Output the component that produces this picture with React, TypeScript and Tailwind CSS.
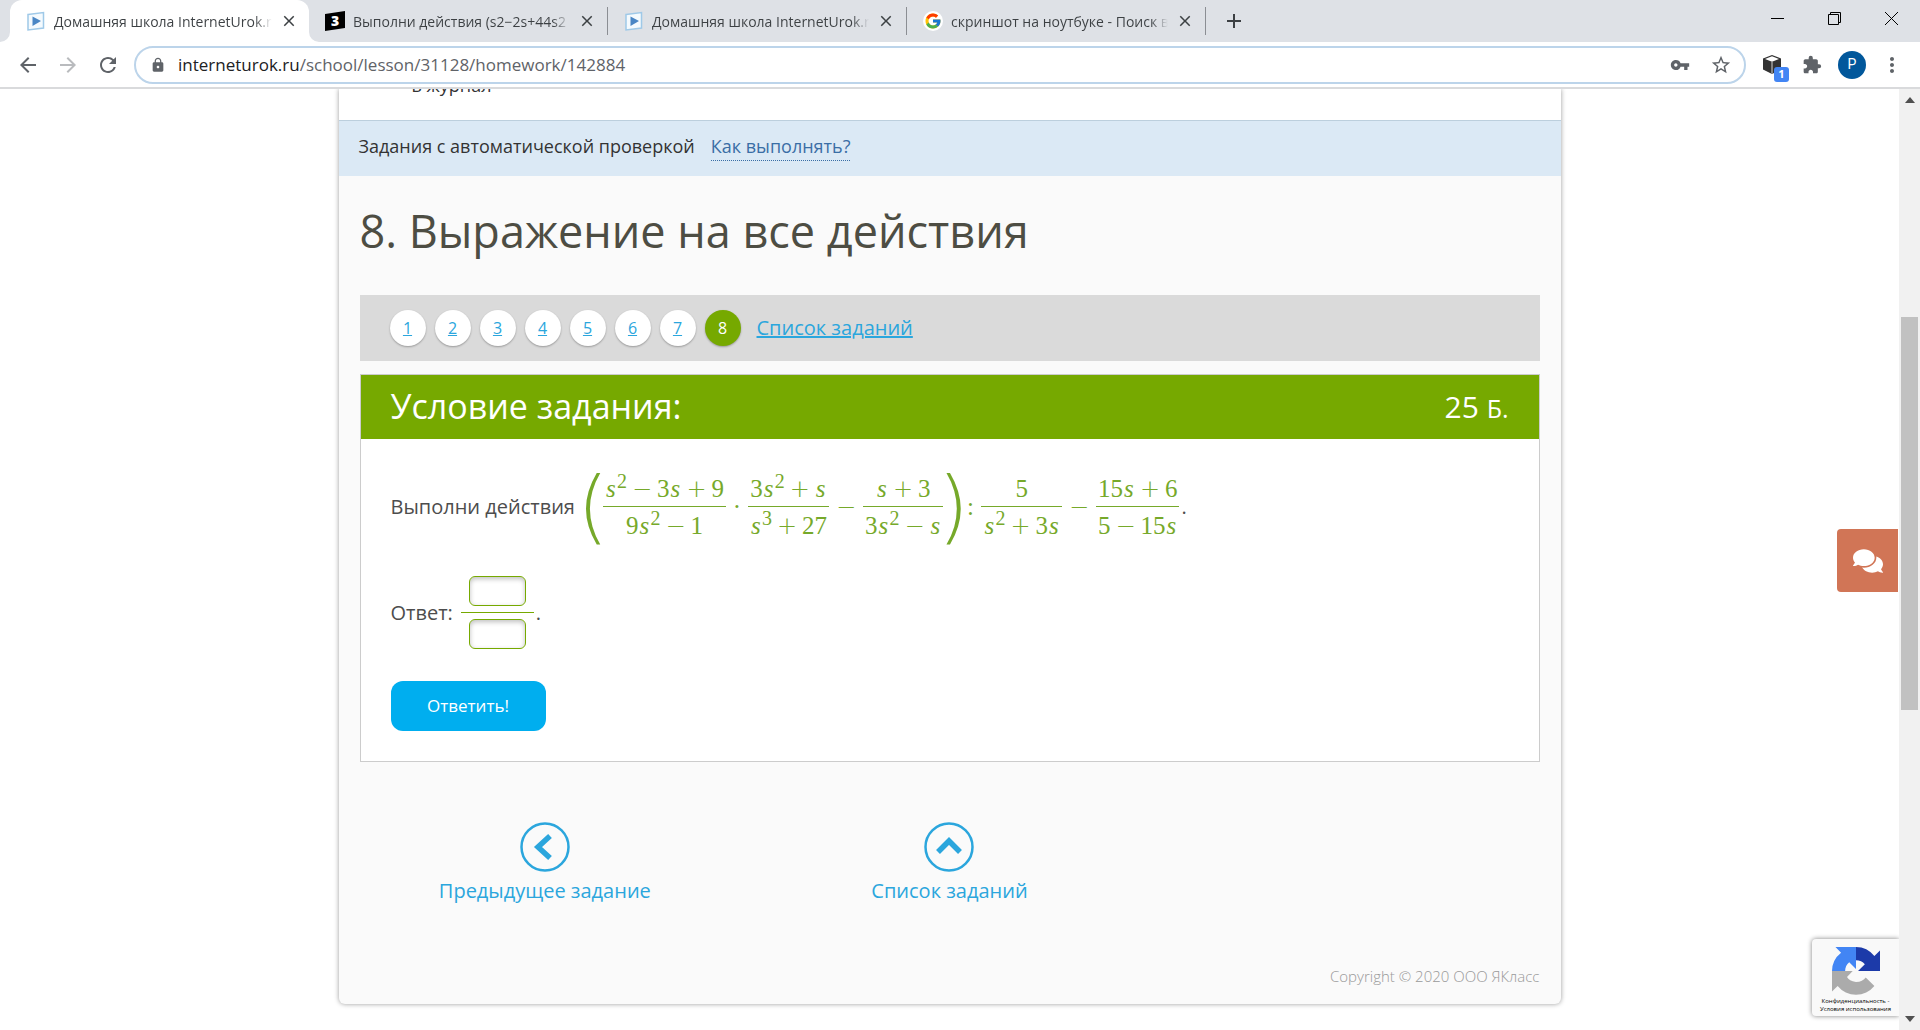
import type { ReactNode } from 'react';
import { FaComments } from 'react-icons/fa';
import { FcGoogle } from 'react-icons/fc';
import {
  MdAdd,
  MdArrowBack,
  MdArrowForward,
  MdClose,
  MdExtension,
  MdLock,
  MdMoreVert,
  MdRefresh,
  MdStarBorder,
  MdVpnKey,
} from 'react-icons/md';

const tabs = [
  { title: 'Домашняя школа InternetUrok.ru', icon: 'play', active: true },
  { title: 'Выполни действия (s2−2s+44s2', icon: 'znanija', active: false },
  { title: 'Домашняя школа InternetUrok.ru', icon: 'play', active: false },
  { title: 'скриншот на ноутбуке - Поиск в', icon: 'google', active: false },
];

const TabIcon = ({ name }: { name: string }) => {
  if (name === 'google') {
    return (
      <span className="flex size-5 shrink-0 items-center justify-center rounded-full bg-white">
        <FcGoogle className="size-[18px]" />
      </span>
    );
  }
  if (name === 'znanija') {
    return (
      <svg viewBox="0 0 20 20" className="size-5 shrink-0">
        <path d="M0 3L20 0v17L0 20z" fill="#000" />
        <text x="10" y="15" textAnchor="middle" fontFamily="Open Sans, sans-serif" fontWeight="800" fontSize="14" fill="#fff">
          3
        </text>
      </svg>
    );
  }
  return (
    <svg viewBox="0 0 20 20" className="size-5 shrink-0">
      <path d="M2 3.500L17.500 1.500V17L2 19z" fill="#f4fafe" stroke="#9fc9e8" strokeWidth="1.500" />
      <path d="M6.500 5.500L15 10l-8.500 5z" fill="#4a86c5" />
    </svg>
  );
};

const TabStrip = () => (
  <div className="flex h-[42px] shrink-0 bg-[#dee1e6] pl-[10px]">
    {tabs.map((tab, i) => (
      <div
        key={i}
        className={`relative flex w-[299px] items-center ${tab.active ? 'rounded-t-xl bg-white' : ''}`}
      >
        {/* curved feet of the active tab */}
        {tab.active && (
          <>
            <svg viewBox="0 0 10 10" className="absolute bottom-0 -left-[10px] size-[10px]">
              <path d="M10 0v10H0A10 10 0 0 0 10 0z" fill="#fff" />
            </svg>
            <svg viewBox="0 0 10 10" className="absolute -right-[10px] bottom-0 size-[10px]">
              <path d="M0 0v10h10A10 10 0 0 1 0 0z" fill="#fff" />
            </svg>
          </>
        )}
        <div className={`flex h-7 w-full items-center gap-2 pr-[11px] pl-4 ${tab.active ? '' : 'border-r border-[#8b8e93]'}`}>
          <TabIcon name={tab.icon} />
          <span className="flex-1 overflow-hidden whitespace-nowrap bg-linear-to-r from-[#3c4043] from-92% to-transparent bg-clip-text text-[14px] text-transparent">
            {tab.title}
          </span>
          <button aria-label="Закрыть вкладку">
            <MdClose className="size-[18px] text-[#3c4043]" />
          </button>
        </div>
      </div>
    ))}
    <button aria-label="Новая вкладка" className="ml-4">
      <MdAdd className="size-6 text-[#3c4043]" />
    </button>
    <div className="ml-auto flex h-9 items-center">
      <button aria-label="Свернуть" className="flex w-[57px] justify-center">
        <svg viewBox="0 0 13 13" className="size-[13px]">
          <path d="M0 6.500h13" stroke="#000" />
        </svg>
      </button>
      <button aria-label="Восстановить" className="flex w-[57px] justify-center">
        <svg viewBox="0 0 13 13" className="size-[13px]" fill="none" stroke="#000">
          <path d="M.5 2.500h10v10H.5zM2.500 2.500v-2h10v10h-2" />
        </svg>
      </button>
      <button aria-label="Закрыть" className="flex w-[57px] justify-center">
        <svg viewBox="0 0 13 13" className="size-[13px]">
          <path d="M0 0l13 13M13 0L0 13" stroke="#000" />
        </svg>
      </button>
    </div>
  </div>
);

const Toolbar = () => (
  <div className="flex h-[47px] shrink-0 items-center border-b-2 border-[#d9dadc] bg-white px-4 text-[#5f6368]">
    <button aria-label="Назад">
      <MdArrowBack className="size-6" />
    </button>
    <button aria-label="Вперёд" className="ml-4">
      <MdArrowForward className="size-6 text-[#b9bbbe]" />
    </button>
    <button aria-label="Обновить" className="ml-4">
      <MdRefresh className="size-6" />
    </button>
    <div className="ml-[14px] flex h-[38px] flex-1 items-center rounded-full border-2 border-[#bcd4ea] pr-3 pl-[14px]">
      <MdLock className="size-4" />
      <span className="ml-3 flex-1 text-[17px]">
        <span className="text-[#202124]">interneturok.ru</span>/school/lesson/31128/homework/142884
      </span>
      <MdVpnKey className="size-5" />
      <button aria-label="Добавить в закладки" className="ml-5">
        <MdStarBorder className="size-[22px]" />
      </button>
    </div>
    <button aria-label="Расширение" className="relative ml-4">
      <svg viewBox="0 0 20 20" className="size-5">
        <path d="M10 0l9 3.500v11L10 19l-9-4.500v-11z" fill="#333" />
        <path d="M10 1.200l7 2.700-7 2.900-7-2.900z" fill="#fff" />
        <path d="M10 7v11.500" stroke="#fff" strokeWidth=".8" />
      </svg>
      <span className="absolute top-3 left-3 flex size-[15px] items-center justify-center rounded-[3px] bg-[#4285f4] text-[11px] font-bold text-white">
        1
      </span>
    </button>
    <button aria-label="Расширения" className="ml-5">
      <MdExtension className="size-5" />
    </button>
    <button className="ml-4 flex size-7 items-center justify-center rounded-full bg-[#01579b] font-[Roboto] text-[14px] text-white">
      P
    </button>
    <button aria-label="Меню" className="ml-[14px]">
      <MdMoreVert className="size-6" />
    </button>
  </div>
);

const Op = ({ children }: { children: string }) => (
  <span className="mx-[5px] inline-block w-5 text-center font-['DejaVu_Sans'] text-[24px] leading-6 font-extralight">
    {children}
  </span>
);

const S = ({ power }: { power?: string }) => (
  <>
    <i className="inline-block w-3 text-center">s</i>
    {power && <sup className="-top-[9px] text-[20px]">{power}</sup>}
  </>
);

const Frac = ({ top, bottom }: { top: ReactNode; bottom: ReactNode }) => (
  <span className="mx-[2px] flex flex-col items-center whitespace-nowrap">
    <span className="h-9 px-[2px] leading-[38px]">{top}</span>
    <span className="h-px w-full bg-[#76a92a]" />
    <span className="h-9 px-[2px] leading-[38px]">{bottom}</span>
  </span>
);

const Paren = ({ children }: { children: string }) => (
  <span className="flex w-4 justify-center font-['DejaVu_Sans'] text-[80px] leading-[70px] font-extralight">
    {children}
  </span>
);

const Formula = () => (
  <span className="ml-[10px] flex items-center font-['Liberation_Serif'] text-[25px] text-[#76a92a]">
    <Paren>(</Paren>
    <Frac
      top={<><S power="2" /><Op>−</Op>3<S /><Op>+</Op>9</>}
      bottom={<>9<S power="2" /><Op>−</Op>1</>}
    />
    <span className="w-[18px] text-center">·</span>
    <Frac
      top={<>3<S power="2" /><Op>+</Op><S /></>}
      bottom={<><S power="3" /><Op>+</Op>27</>}
    />
    <Op>−</Op>
    <Frac
      top={<><S /><Op>+</Op>3</>}
      bottom={<>3<S power="2" /><Op>−</Op><S /></>}
    />
    <Paren>)</Paren>
    <span className="w-[18px] text-center">:</span>
    <Frac top="5" bottom={<><S power="2" /><Op>+</Op>3<S /></>} />
    <Op>−</Op>
    <Frac
      top={<>15<S /><Op>+</Op>6</>}
      bottom={<>5<Op>−</Op>15<S /></>}
    />
  </span>
);

const Pager = () => (
  <nav className="flex h-[66px] items-center bg-[#dadada] pl-[30px]">
    {[1, 2, 3, 4, 5, 6, 7].map((n) => (
      <a
        key={n}
        href={`#${n}`}
        className="mr-[9px] flex size-9 items-center justify-center rounded-full bg-white text-[16px] text-[#2ba6dd] underline shadow-[0_1px_2px_rgba(0,0,0,0.3)]"
      >
        {n}
      </a>
    ))}
    <span className="flex size-9 items-center justify-center rounded-full bg-[#76a900] text-[16px] text-white shadow-[0_1px_2px_rgba(0,0,0,0.3)]">
      8
    </span>
    <a href="#list" className="ml-4 text-[20px] text-[#2ba6dd] underline">
      Список заданий
    </a>
  </nav>
);

const Task = () => (
  <section className="mt-[13px] border border-[#ccc] bg-white">
    <header className="flex h-16 items-center justify-between bg-[#76a900] px-[30px] pb-[2px] text-white">
      <h2 className="text-[34px]">Условие задания:</h2>
      <span className="text-[30px]">
        25 <span className="text-[25px]">Б.</span>
      </span>
    </header>
    <div className="px-[30px] pt-[31px] pb-[30px] text-[20px] text-[#4d4d4d]">
      <div className="flex items-center">
        Выполни действия
        <Formula />
        .
      </div>
      <div className="mt-[33px] flex items-center">
        Ответ:
        <div className="mr-[2px] ml-2 flex w-[73px] flex-col items-center">
          <input
            aria-label="Числитель"
            className="h-[30px] w-[57px] rounded-md border border-[#76a900] bg-white px-1 shadow-[inset_0_2px_5px_rgba(0,0,0,0.25)]"
          />
          <span className="my-[6px] h-px w-full bg-[#76a900]" />
          <input
            aria-label="Знаменатель"
            className="h-[30px] w-[57px] rounded-md border border-[#76a900] bg-white px-1 shadow-[inset_0_2px_5px_rgba(0,0,0,0.25)]"
          />
        </div>
        .
      </div>
      <button className="mt-8 h-[50px] w-[155px] rounded-xl bg-[#00aeef] text-[17px] text-white">
        Ответить!
      </button>
    </div>
  </section>
);

const RoundLink = ({ label, path }: { label: string; path: string }) => (
  <a href="#task" className="flex flex-col items-center text-[20px] text-[#2ba6dd]">
    <svg viewBox="0 0 50 50" className="size-[50px]" fill="none" stroke="#2ba6dd">
      <circle cx="25" cy="25" r="23.500" strokeWidth="2.500" />
      <path d={path} strokeWidth="5.500" />
    </svg>
    <span className="mt-[5px] leading-7">{label}</span>
  </a>
);

const Recaptcha = () => (
  <div className="absolute right-0 bottom-[14px] flex h-[77px] w-[87px] flex-col items-center rounded-l-sm bg-[#f9f9f9] pt-2 shadow-[0_0_5px_gray]">
    <svg viewBox="0 0 64 64" className="size-12">
      <path d="M64 32V4.600l-7.500 7.500A31.500 31.500 0 0 0 32 0v17.500c5 0 9 2 11.800 5.500L34.700 32z" fill="#1c3aa9" />
      <path d="M32 0H4.600l7.500 7.500A31.500 31.500 0 0 0 0 32h17.500c0-5 2-9 5.500-11.800l9 9z" fill="#4285f4" />
      <path d="M0 32v27.400l7.500-7.500A31.500 31.500 0 0 0 56.500 52L45 40.500c-2.500 3.700-7 6-13 6-6.500-1-10-3-12-6.500L27.600 32z" fill="#ababab" />
    </svg>
    <span className="mt-[2px] text-center text-[6px] leading-[8px] text-black">
      Конфиденциальность -
      <br />
      Условия использования
    </span>
  </div>
);

const Scrollbar = () => (
  <div className="flex w-[21px] shrink-0 flex-col items-center bg-[#f1f1f1] py-2">
    <svg viewBox="0 0 10 6" className="h-[6px] w-[10px]">
      <path d="M0 6l5-6 5 6z" fill="#505050" />
    </svg>
    <div className="my-2 flex w-[17px] flex-1 flex-col">
      <div className="grow-[205]" />
      <div className="grow-[392] bg-[#c1c1c1]" />
      <div className="grow-[297]" />
    </div>
    <svg viewBox="0 0 10 6" className="h-[6px] w-[10px]">
      <path d="M0 0h10L5 6z" fill="#505050" />
    </svg>
  </div>
);

const App = () => (
  <div className="flex h-screen flex-col overflow-hidden bg-white font-['Open_Sans',sans-serif]">
    <TabStrip />
    <Toolbar />
    <div className="flex min-h-0 flex-1">
      <main className="relative flex-1 overflow-hidden">
        <div className="mx-auto max-w-[1222px] rounded-b-md bg-[#fafafa] shadow-[0_0_5px_rgba(0,0,0,0.4)]">
          <div className="flex h-[31px] items-start bg-white pl-[73px] text-[18px] text-[#333]">
            <p className="-mt-4 leading-6">в журнал</p>
          </div>
          <div className="flex h-14 items-center border-t border-[#bccfdd] bg-[#dbe9f5] pb-1 pl-5 text-[18px] text-[#333]">
            Задания с автоматической проверкой
            <a href="#help" className="ml-4 border-b border-dotted border-[#3a6ea5] text-[#3a6ea5]">
              Как выполнять?
            </a>
          </div>
          <div className="px-[21px]">
            <h1 className="pt-[22px] pb-[31px] text-[45px] leading-[66px] text-[#4d4d43]">
              8. Выражение на все действия
            </h1>
            <Pager />
            <Task />
          </div>
          <div className="mt-[60px] grid grid-cols-3 px-1">
            <RoundLink label="Предыдущее задание" path="M30 14L18 25l12 11" />
            <RoundLink label="Список заданий" path="M14 30l11-11 11 11" />
          </div>
          <p className="mt-[59px] pr-[21px] pb-4 text-right text-[15px] leading-6 font-light text-[#999]">
            Copyright © 2020 ООО ЯКласс
          </p>
        </div>
        <button
          aria-label="Чат"
          className="absolute top-[440px] right-px flex h-[63px] w-[61px] items-center justify-center rounded-l-sm bg-[#d17556]"
        >
          <FaComments className="size-[30px] text-white" />
        </button>
        <Recaptcha />
      </main>
      <Scrollbar />
    </div>
  </div>
);

export default App;
